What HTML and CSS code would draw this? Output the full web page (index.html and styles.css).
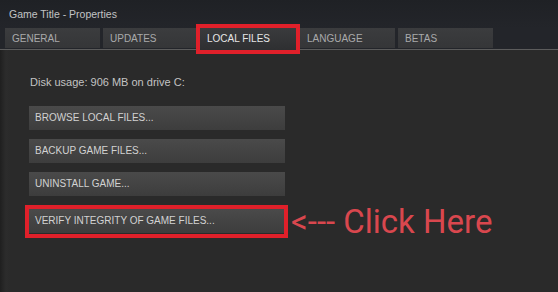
FILE: index.html
```html
<!DOCTYPE html>
<html>
<head>
<meta charset="utf-8">
<link rel="stylesheet" href="styles.css">
</head>
<body>
<div class="window">
  <div class="titlebar">Game Title - Properties</div>
  <div class="tabs">
    <div class="tab">GENERAL</div>
    <div class="tab">UPDATES</div>
    <div class="tab active">LOCAL FILES</div>
    <div class="tab">LANGUAGE</div>
    <div class="tab">BETAS</div>
  </div>
  <div class="content">
    <div class="disk">Disk usage: 906 MB on drive C:</div>
    <div class="buttons">
      <div class="btn">BROWSE LOCAL FILES...</div>
      <div class="btn">BACKUP GAME FILES...</div>
      <div class="btn">UNINSTALL GAME...</div>
      <div class="row">
        <div class="btn highlight">VERIFY INTEGRITY OF GAME FILES...</div>
        <div class="click">&lt;--- Click Here</div>
      </div>
    </div>
  </div>
</div>
</body>
</html>
```

FILE: styles.css
```css
html, body {
  margin: 0;
  padding: 0;
}
body {
  width: 558px;
  height: 292px;
  overflow: hidden;
  background: #2a2a2a;
  font-family: "Liberation Sans", Arial, sans-serif;
}
.window {
  display: flex;
  flex-direction: column;
  width: 558px;
  height: 292px;
  background: #2a2a2a;
}
.titlebar {
  height: 28px;
  line-height: 28px;
  padding-left: 9px;
  font-size: 10.5px;
  color: #c2c3c5;
  background: linear-gradient(#1f2125, #23252a);
  box-sizing: border-box;
}
.tabs {
  display: flex;
  gap: 3px;
  padding-left: 5px;
  height: 22px;
  box-sizing: border-box;
  padding-bottom: 1px;
  border-bottom: 1px solid #5c5c5c;
  background: #23252a;
}
.tab {
  position: relative;
  width: 95px;
  height: 20px;
  line-height: 21px;
  padding-left: 7px;
  box-sizing: border-box;
  font-size: 10px;
  color: #a9aaab;
  background: linear-gradient(#3b3c3e, #353638);
}
.tab.active {
  width: 96px;
  height: 22px;
  margin-left: -1px;
  margin-right: 1px;
  color: #e6e6e6;
  background: linear-gradient(#3a3b3d, #2e2f31);
  z-index: 1;
}
.tab.active::after {
  content: "";
  position: absolute;
  left: -4px;
  right: -4px;
  top: -4px;
  bottom: -4px;
  border: 4px solid #e0202a;
}
.content {
  flex: 1;
  padding: 26px 0 0 29px;
  background: linear-gradient(90deg, #1f1f1f 0, #262626 3px, #2c2c2c 6px, #2a2a2a 10px);
}
.disk {
  font-size: 11px;
  line-height: 13px;
  color: #c3c3c3;
  padding-left: 1px;
}
.buttons {
  display: flex;
  flex-direction: column;
  gap: 9px;
  margin-top: 17px;
}
.btn {
  position: relative;
  width: 256px;
  height: 24px;
  line-height: 24px;
  padding-left: 6px;
  box-sizing: border-box;
  font-size: 10px;
  color: #d2d2d2;
  background: linear-gradient(#4a4a4a, #3d3d3d);
}
.row {
  display: flex;
  align-items: center;
  gap: 6px;
}
.btn.highlight::after {
  content: "";
  position: absolute;
  left: -4px;
  right: -3px;
  top: -4px;
  bottom: -5px;
  border: 4px solid #e0202a;
}
.click {
  font-family: Roboto, "Liberation Sans", sans-serif;
  font-size: 33px;
  line-height: 30px;
  color: #d9474e;
  margin-top: 2px;
  white-space: nowrap;
}
```
